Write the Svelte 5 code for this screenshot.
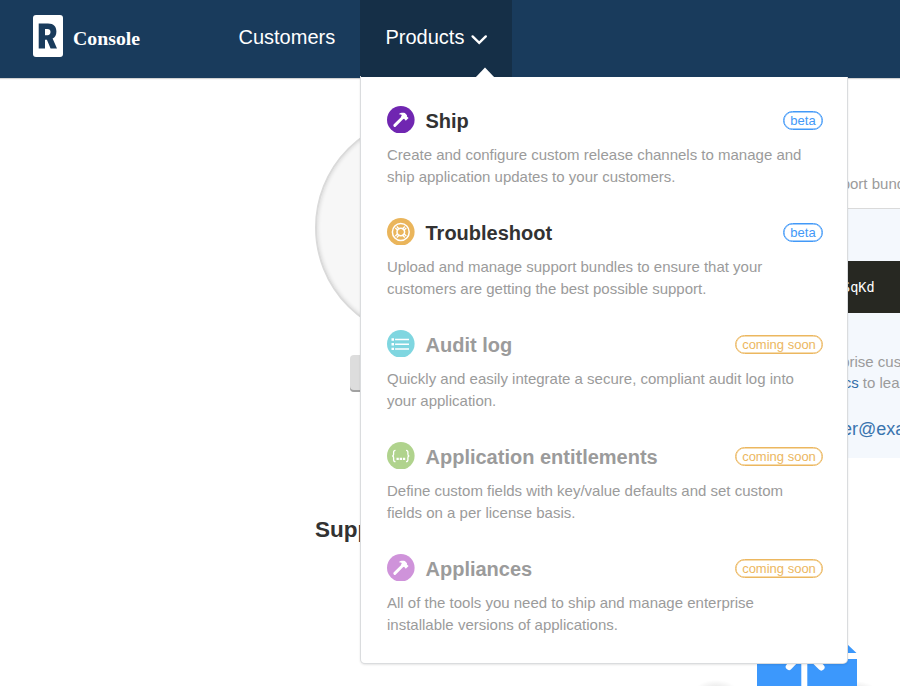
<script>
  const products = [
    { name: 'Ship', icon: 'hammer', color: '#7026b1', badge: 'beta', lines: ['Create and configure custom release channels to manage and', 'ship application updates to your customers.'] },
    { name: 'Troubleshoot', icon: 'buoy', color: '#eab55b', badge: 'beta', lines: ['Upload and manage support bundles to ensure that your', 'customers are getting the best possible support.'] },
    { name: 'Audit log', icon: 'list', color: '#7fd6e0', badge: 'coming soon', lines: ['Quickly and easily integrate a secure, compliant audit log into', 'your application.'] },
    { name: 'Application entitlements', icon: 'braces', color: '#b0d38d', badge: 'coming soon', lines: ['Define custom fields with key/value defaults and set custom', 'fields on a per license basis.'] },
    { name: 'Appliances', icon: 'hammer', color: '#cf93da', badge: 'coming soon', lines: ['All of the tools you need to ship and manage enterprise', 'installable versions of applications.'] }
  ];
</script>

<div class="app">
  <header>
    <div class="brand">
      <svg width="30" height="42" viewBox="0 0 30 42">
        <rect width="30" height="42" rx="3" fill="#fff" />
        <path fill="#193b5c" fill-rule="evenodd" d="M5.7 8.6H15C20.8 8.6 23.4 11.8 23.4 16.5C23.4 20 22 22.4 19.6 23.6L24 33.4H17.6L13.9 24.8H12V33.4H5.7ZM12 14V20.2H14.4C16.6 20.2 17.5 19 17.5 17C17.5 15 16.6 14 14.4 14Z" />
      </svg>
      <span>Console</span>
    </div>
    <nav>
      <span class="link">Customers</span>
      <span class="link active">Products
        <svg width="18" height="12" viewBox="0 0 18 12"><path d="M2.6 2.4L9.2 8.8L15.8 2.4" fill="none" stroke="#fff" stroke-width="2.4" stroke-linecap="round" /></svg>
      </span>
    </nav>
  </header>

  <main>
    <section class="profile">
      <div class="avatar"></div>
      <div class="button"></div>
      <h2>Support</h2>
    </section>
    <aside>
      <p class="intro">Support bundles</p>
      <div class="panel">
        <div class="code">SqKd</div>
        <p class="enterprise">enterprise customers</p>
        <p class="docs"><b>docs</b> to learn</p>
        <p class="email">user@example</p>
      </div>
      <svg class="gift" width="100" height="42" viewBox="0 0 100 42">
        <defs>
          <radialGradient id="soft"><stop offset="0" stop-color="#000" stop-opacity=".1" /><stop offset="1" stop-color="#000" stop-opacity="0" /></radialGradient>
        </defs>
        <ellipse cx="-41" cy="45" rx="20" ry="9" fill="url(#soft)" />
        <ellipse cx="98" cy="45" rx="20" ry="8" fill="url(#soft)" />
        <path d="M0 9V0H90L99.5 9ZM0 15H44.3V42H0ZM50.3 15H100V42H50.3Z" fill="#3c98fc" />
        <path d="M32 22.7L40 14.5M64.3 23.2L55.5 14.5" stroke="#fff" stroke-width="6.5" stroke-linecap="round" />
      </svg>
    </aside>
  </main>

  <div class="menu">
    <svg class="caret" width="20" height="11" viewBox="0 0 20 11"><path d="M0 11L10 0.5L20 11Z" fill="#fff" /></svg>
    {#each products as p}
      <article>
        <div class="head">
          <svg width="28" height="27" viewBox="0 0 28 27">
            <circle cx="13.8" cy="13.8" r="13.8" fill={p.color} />
            {#if p.icon === 'hammer'}
              <path d="M7.8 19.4L15.5 11.8" stroke="#fff" stroke-width="2.9" stroke-linecap="round" />
              <path d="M11.8 8.3C13.2 6.6 15.5 6.5 17.9 6.9L20 9.2L19.9 10.4L21.6 12.1L18.8 14.7L17.1 12.8L16.4 13.1L14 10.6L14.9 9C13.9 8.4 12.9 8.2 11.8 8.3Z" fill="#fff" />
            {:else if p.icon === 'buoy'}
              <g fill="none" stroke="#fff">
                <circle cx="13.8" cy="14" r="8.4" stroke-width="1.5" />
                <circle cx="13.8" cy="14" r="3.8" stroke-width="1.5" />
                <path d="M8.3 10L11 12.4M9.8 8.5L12.4 11.2M19.3 10L16.6 12.4M17.8 8.5L15.2 11.2M8.3 18L11 15.6M9.8 19.5L12.4 16.8M19.3 18L16.6 15.6M17.8 19.5L15.2 16.8" stroke-width="1.3" />
              </g>
            {:else if p.icon === 'list'}
              <path d="M8.1 9.5H22M8.1 14.2H22M8.1 18.9H22" stroke="#fff" stroke-width="1.5" />
              <path d="M4.5 8.3H7v2.4H4.5ZM4.5 13H7v2.4H4.5ZM4.5 17.7H7v2.4H4.5Z" fill="#fff" />
            {:else}
              <path d="M8.5 8.3C6.8 8.3 6.6 9 6.6 10.2V12.3C6.6 13.3 6.2 14 5.2 14C6.2 14 6.6 14.7 6.6 15.7V17.8C6.6 19 6.8 19.7 8.5 19.7M19 8.3C20.7 8.3 20.9 9 20.9 10.2V12.3C20.9 13.3 21.3 14 22.3 14C21.3 14 20.9 14.7 20.9 15.7V17.8C20.9 19 20.7 19.7 19 19.7" fill="none" stroke="#fff" stroke-width="1.3" />
              <path d="M9.5 15.8h2.3v2.2h-2.3ZM12.7 15.8h2.3v2.2h-2.3ZM15.9 15.8h2.3v2.2h-2.3Z" fill="#fff" />
            {/if}
          </svg>
          <h3 class:muted={p.badge !== 'beta'}>{p.name}</h3>
          <span class="badge" class:soon={p.badge !== 'beta'}>{p.badge}</span>
        </div>
        <p>{#each p.lines as line}<span>{line}</span>{/each}</p>
      </article>
    {/each}
  </div>
</div>

<style>
  :global(body) { margin: 0; overflow: hidden; }
  * { box-sizing: border-box; }
  .app { position: relative; width: 900px; height: 686px; overflow: hidden; background: #fff; font-family: "Liberation Sans", Arial, sans-serif; }
  h2, h3, p { margin: 0; }
  header { display: flex; height: 78px; background: #193b5c; box-shadow: 0 1px 1px rgba(0, 0, 0, .18); }
  .brand { display: flex; width: 214px; padding: 15px 0 0 33px; gap: 10px; color: #fff; font: bold 19.8px/24px "Liberation Serif", "Times New Roman", serif; }
  .brand span { padding-top: 11px; }
  nav { display: flex; color: #fff; font-size: 20px; line-height: 24px; }
  .link { height: 77px; width: 146px; padding: 25px 0 0 24.5px; white-space: nowrap; }
  .active { display: flex; width: 152px; padding-left: 25.5px; gap: 6px; background: #152f47; }
  .active svg { margin-top: 8.5px; }
  main { display: flex; padding-left: 315px; }
  .profile { width: 442px; padding-top: 37px; }
  .avatar { width: 225px; height: 225px; border: 2px solid #dadada; border-radius: 50%; background: #f7f7f7; box-shadow: inset 0 0 4px rgba(0, 0, 0, .16); }
  .button { width: 155px; height: 37px; margin: 15px 0 0 35px; border-radius: 4px; background: #ddd; box-shadow: inset 0 -2px #a2a2a2; }
  h2 { margin-top: 124px; font-size: 22.5px; line-height: 28px; color: #323232; }
  aside { width: 143px; color: #9b9b9b; font-size: 15px; line-height: 21px; white-space: nowrap; }
  .intro { height: 130px; padding: 95px 0 0 58px; }
  .panel { height: 250px; border-top: 1px solid #dadada; background: #f4f8fd; }
  .code { height: 52px; margin-top: 52px; padding-left: 85px; background: #272822; color: #fff; font: 13.5px/53px "DejaVu Sans Mono", monospace; }
  .enterprise { padding: 38px 0 0 50px; }
  .docs { padding-left: 70px; }
  .docs b { font-weight: normal; color: #326da8; }
  .email { padding: 25px 0 0 66px; color: #3974ae; font-size: 18px; line-height: 22px; }
  .gift { display: block; margin-top: 186px; overflow: visible; }
  .menu { position: absolute; left: 361px; top: 77px; width: 486px; height: 586px; padding: 29px 24px 0 26px; background: #fff; border-radius: 0 0 4px 4px; box-shadow: 0 0 0 1px #dadcde, 0 1px 3px rgba(0, 0, 0, .2); clip-path: inset(-11px -5px -5px -5px); }
  .menu::before { content: ""; position: absolute; left: 0; right: 0; top: -1px; height: 1px; background: #152f47; width: 151px; }
  .menu::after { content: ""; position: absolute; left: 151px; right: -1px; top: -1px; height: 1px; background: #193b5c; }
  .caret { position: absolute; left: 113.5px; top: -10px; z-index: 1; }
  article { height: 112px; }
  .head { display: flex; height: 28px; }
  .head > svg { flex: none; }
  h3 { flex: 1; padding-left: 10.5px; font-size: 20px; line-height: 30px; color: #323232; }
  h3.muted { color: #9b9b9b; }
  .badge { width: 40px; height: 19px; margin-top: 5px; border: 1px solid #4299f8; border-radius: 10px; box-shadow: inset 0 0 0 .5px #4299f8; color: #4299f8; font-size: 13px; line-height: 17px; text-align: center; white-space: nowrap; }
  .soon { width: 88px; border-color: #ecb75f; box-shadow: inset 0 0 0 .5px #ecb75f; color: #ecb75f; }
  article p { padding-top: 10px; font-size: 15px; line-height: 22px; color: #9b9b9b; white-space: nowrap; }
  article p span { display: block; }
</style>
